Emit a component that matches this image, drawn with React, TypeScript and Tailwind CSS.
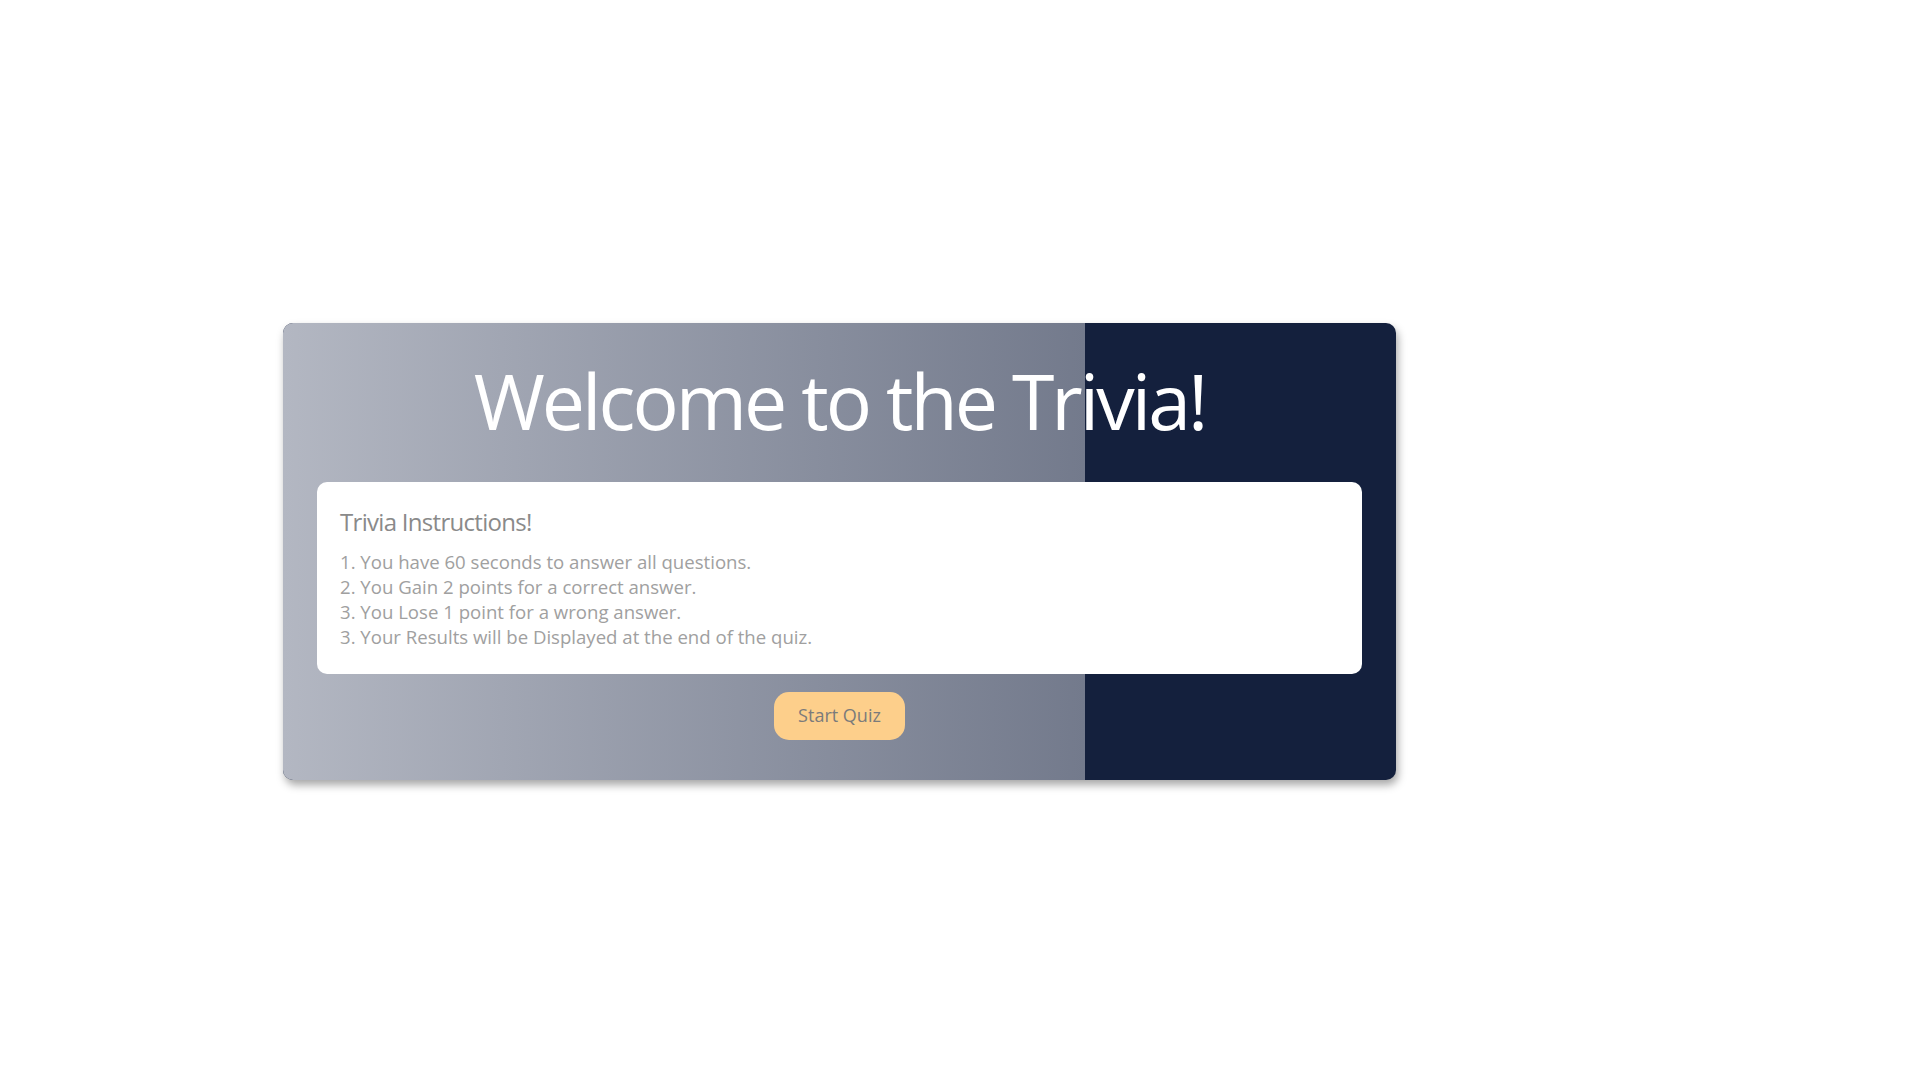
const rules = [
  "1. You have 60 seconds to answer all questions.",
  "2. You Gain 2 points for a correct answer.",
  "3. You Lose 1 point for a wrong answer.",
  "3. Your Results will be Displayed at the end of the quiz.",
];

export default function App() {
  return (
    <div className="min-h-screen bg-white pl-[283px] pt-[323px] font-['Open_Sans',sans-serif]">
      <div className="relative w-[1113px] rounded-[10px] bg-[#14203d] px-[34px] pb-[40px] pt-[20px] shadow-[2px_5px_9px_rgba(0,0,0,0.35)]">
        {/* light gradient layer over the left part of the card */}
        <div className="absolute inset-y-0 left-0 w-[802px] rounded-l-[10px] bg-gradient-to-r from-[#b3b7c2] to-[#737a8c]" />

        <div className="relative flex flex-col items-center">
          <h1 className="text-[77px] font-normal leading-normal tracking-[-3px] text-white">
            Welcome to the Trivia!
          </h1>

          <div className="mt-[23px] w-full rounded-[10px] bg-white px-[23px] pb-[25px] pt-[22px]">
            <h3 className="text-2xl font-normal leading-normal tracking-[-0.7px] text-[#8a8a8a]">
              Trivia Instructions!
            </h3>
            <ul className="mt-[9px] text-[18.6px] leading-[25px] text-[#a0a0a0]">
              {rules.map((r, i) => (
                <li key={i}>{r}</li>
              ))}
            </ul>
          </div>

          <button className="mt-[18px] h-12 rounded-[15px] bg-[#fdcf8b] px-6 text-[18px] text-[#7b7b7b]">
            Start Quiz
          </button>
        </div>
      </div>
    </div>
  );
}
